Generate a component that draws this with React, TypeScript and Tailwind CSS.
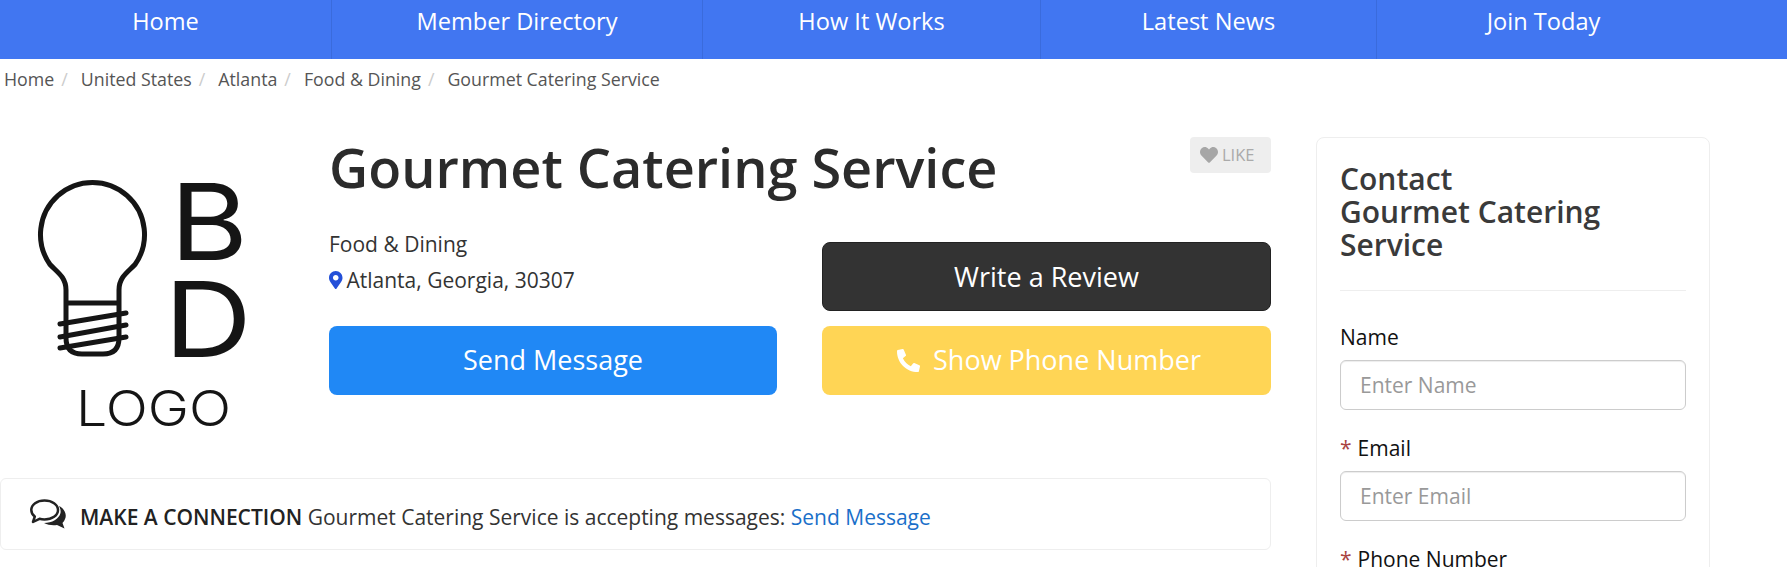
import React from 'react';
import { FaHeart, FaMapMarkerAlt, FaPhoneAlt } from 'react-icons/fa';

const NAV_ITEMS = [
  { label: 'Home', width: 'w-[332px]' },
  { label: 'Member Directory', width: 'w-[371px]' },
  { label: 'How It Works', width: 'w-[338px]' },
  { label: 'Latest News', width: 'w-[336px]' },
  { label: 'Join Today', width: 'w-[333px]' },
];

const CRUMBS = ['Home', 'United States', 'Atlanta', 'Food & Dining'];

const BdLogo = () => (
  <svg viewBox="0 0 320 310" className="w-[320px] h-[310px] mt-[3px]" fill="none">
    <path
      d="M66 163 V150 C66 137 57 132 50 124.500 A52 52 0 1 1 135 124.500 C128 132 119 137 119 150 V198 Q119 214 103 214 H82 Q66 214 66 198 V163 H119"
      stroke="#151515"
      strokeWidth="5"
      strokeLinejoin="round"
    />
    <path
      d="M60 184 L126 173 M60 197 L126 185 M60 208 L126 197"
      stroke="#151515"
      strokeWidth="5"
      strokeLinecap="round"
    />
    <text x="170" y="120" fill="#151515" fontFamily="Inter, sans-serif" fontSize="106" fontWeight="400" textLength="78" lengthAdjust="spacingAndGlyphs">B</text>
    <text x="164" y="217" fill="#151515" fontFamily="Inter, sans-serif" fontSize="104" fontWeight="400" textLength="88" lengthAdjust="spacingAndGlyphs">D</text>
    <text x="76" y="286" fill="#151515" fontFamily="Inter, sans-serif" fontSize="49" fontWeight="300" textLength="155" lengthAdjust="spacingAndGlyphs">LOGO</text>
  </svg>
);

const ChatIcon = () => (
  <svg viewBox="0 0 37 31" className="w-[37px] h-[31px]" fill="none">
    <path
      d="M29 7 C35 10 37 16 35 20 C34.500 22 33 23 32.500 24 L34.500 29.500 L27 26 C22 26.500 18 26 14 24 C22 24 29 20 30.500 14 C31 11 30 9 29 7 Z"
      fill="#222"
    />
    <path
      d="M14.500 1.500 C22 1.500 28 5.500 28 11 C28 16.500 22 20.500 14.500 20.500 C12.500 20.500 11 20.300 9.500 19.800 L3 23 L4.800 17.500 C2.500 15.800 1.300 13.500 1.300 11 C1.300 5.500 7 1.500 14.500 1.500 Z"
      fill="#fff"
      stroke="#222"
      strokeWidth="2.500"
      strokeLinejoin="round"
    />
  </svg>
);

const Field = ({ label, placeholder, required }: { label: string; placeholder: string; required?: boolean }) => (
  <div className="mb-[24px]">
    <label className="block text-[21px] leading-[28px] font-medium text-[#111] mb-[9px]">
      {required && <span className="text-[#a94442] font-normal mr-[6px]">*</span>}
      {label}
    </label>
    <input
      type="text"
      placeholder={placeholder}
      className="block w-full h-[50px] px-[19px] text-[21px] bg-white border border-[#ccc] rounded-[6px] shadow-[inset_0_1px_1px_rgba(0,0,0,0.075)] outline-none placeholder:text-[#999]"
    />
  </div>
);

export default function App() {
  return (
    <div className="h-[567px] overflow-hidden bg-white font-['Open_Sans',sans-serif] text-[#333]">
      {/* Nav */}
      <nav className="flex h-[59px] bg-[#4176f1]">
        {NAV_ITEMS.map((item, i) => (
          <a
            key={item.label}
            className={`${item.width} ${i < 4 ? 'border-r border-[#3a6bdc]' : ''} pb-[16px] flex items-center justify-center text-[23.6px] text-white`}
          >
            {item.label}
          </a>
        ))}
      </nav>

      {/* Breadcrumb */}
      <div className="flex items-center h-[40px] pl-[4px] text-[17.8px] text-[#555]">
        {CRUMBS.map((crumb) => (
          <React.Fragment key={crumb}>
            <span>{crumb}</span>
            <span className="text-[#ccc] pl-[7px] pr-[13px]">/</span>
          </React.Fragment>
        ))}
        <span>Gourmet Catering Service</span>
      </div>

      <div className="flex w-[1710px] mt-[38px]">
        {/* Main column */}
        <div className="w-[1271px] shrink-0">
          <div className="flex">
            <div className="w-[329px] shrink-0 h-[341px]">
              <BdLogo />
            </div>
            <div className="flex-1">
              <div className="flex justify-between items-start h-[105px]">
                <h1 className="text-[54px] leading-[60px] font-semibold text-[#2b2b2b]">Gourmet Catering Service</h1>
                <button className="flex items-center gap-[4px] w-[81px] h-[36px] pl-[10px] rounded-[4px] bg-[#eeeeee] text-[16.500px] text-[#aaa]">
                  <FaHeart className="text-[18px] text-[#a6a6a6]" />
                  LIKE
                </button>
              </div>
              <div className="grid grid-cols-[448px_1fr] gap-x-[45px] gap-y-[15px]">
                <div className="h-[69px] text-[21px] text-[#333] leading-[35.500px]">
                  <div className="-mt-[15px]">Food &amp; Dining</div>
                  <div className="flex items-center gap-[4px]">
                    <FaMapMarkerAlt className="w-[13.500px] h-[18px] text-[#2450d8]" />
                    Atlanta, Georgia, 30307
                  </div>
                </div>
                <button className="h-[69px] pt-[2px] rounded-[8px] bg-[#333] border border-[#222] text-[27px] text-white">
                  Write a Review
                </button>
                <button className="h-[69px] rounded-[8px] bg-[#2088f5] text-[27px] text-white">Send Message</button>
                <button className="flex items-center justify-center gap-[13px] h-[69px] pl-[5px] rounded-[8px] bg-[#ffd555] text-[27px] text-white">
                  <FaPhoneAlt className="text-[23px]" />
                  Show Phone Number
                </button>
              </div>
            </div>
          </div>

          {/* Connection banner */}
          <div className="flex items-center h-[72px] pl-[29px] border border-[#eee] rounded-[6px] text-[21px] text-[#333]">
            <ChatIcon />
            <p className="ml-[13px] mt-[7px]">
              <span className="font-semibold text-[#222]">MAKE A CONNECTION</span> Gourmet Catering Service is accepting
              messages: <a className="text-[#1a6fc9]">Send Message</a>
            </p>
          </div>
        </div>

        {/* Contact card */}
        <aside className="ml-[45px] w-[394px] h-[600px] px-[23px] pt-[24px] border border-[#eee] rounded-[8px]">
          <h3 className="text-[30px] leading-[33px] font-semibold text-[#3a3a3a] pb-[29px] border-b border-[#eee] mb-[32px]">
            Contact
            <br />
            Gourmet Catering Service
          </h3>
          <Field label="Name" placeholder="Enter Name" />
          <Field label="Email" placeholder="Enter Email" required />
          <Field label="Phone Number" placeholder="Enter Phone Number" required />
        </aside>
      </div>
    </div>
  );
}
